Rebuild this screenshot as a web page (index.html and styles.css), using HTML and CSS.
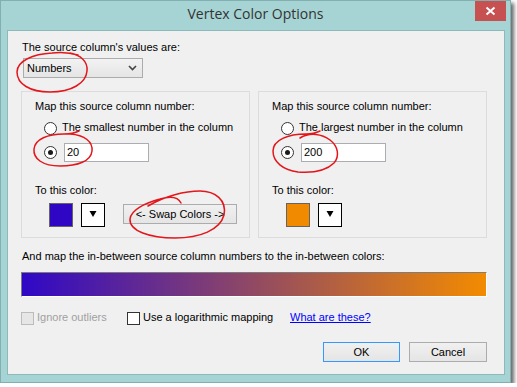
FILE: index.html
```html
<!DOCTYPE html>
<html>
<head>
<meta charset="utf-8">
<title>Vertex Color Options</title>
<link rel="stylesheet" href="styles.css">
</head>
<body>

<!-- DIALOG WINDOW -->
<div class="window">
  <div class="titlebar">
    <span></span>
    <div class="title">Vertex Color Options</div>
    <div class="close">
      <svg width="31" height="20" viewBox="0 0 31 20"><path d="M11.5 6.5 L19.5 13.5 M19.5 6.5 L11.5 13.5" stroke="#fff" stroke-width="2"/></svg>
    </div>
  </div>

  <div class="client">
    <div class="label first">The source column's values are:</div>
    <div class="combo">
      <span>Numbers</span>
      <svg width="9" height="6" viewBox="0 0 9 6"><path d="M1 1 L4.5 4.5 L8 1" fill="none" stroke="#444" stroke-width="1.6"/></svg>
    </div>

    <!-- dos grupos: minimo y maximo -->
    <div class="groups">
      <div class="group">
        <div class="label">Map this source column number:</div>
        <div class="radio-row top">
          <span class="radio"></span><span class="radio-text">The smallest number in the column</span>
        </div>
        <div class="radio-row">
          <span class="radio checked"></span><div class="textbox">20</div>
        </div>
        <div class="label color-label">To this color:</div>
        <div class="color-row">
          <span class="swatch blue"></span>
          <span class="arrow-btn"><svg width="22" height="22" viewBox="0 0 22 22"><polygon points="7.5,7 14.5,7 11,13" fill="#000"/></svg></span>
          <div class="btn swap">&lt;- Swap Colors -&gt;</div>
        </div>
      </div>

      <div class="group">
        <div class="label">Map this source column number:</div>
        <div class="radio-row top">
          <span class="radio"></span><span class="radio-text">The largest number in the column</span>
        </div>
        <div class="radio-row">
          <span class="radio checked"></span><div class="textbox">200</div>
        </div>
        <div class="label color-label">To this color:</div>
        <div class="color-row">
          <span class="swatch orange"></span>
          <span class="arrow-btn"><svg width="22" height="22" viewBox="0 0 22 22"><polygon points="7.5,7 14.5,7 11,13" fill="#000"/></svg></span>
        </div>
      </div>
    </div>

    <div class="label between">And map the in-between source column numbers to the in-between colors:</div>
    <div class="gradient"></div>

    <div class="check-row">
      <div class="check-item ignore"><span class="checkbox disabled"></span><span class="muted">Ignore outliers</span></div>
      <div class="check-item log"><span class="checkbox"></span><span>Use a logarithmic mapping</span></div>
      <a class="link" href="#">What are these?</a>
    </div>

    <div class="buttons">
      <div class="btn ok">OK</div>
      <div class="btn cancel">Cancel</div>
    </div>
  </div>
</div>

<!-- marcas rojas a mano sobre la captura -->
<svg class="marks" width="517" height="387" viewBox="0 0 517 387">
  <g fill="none" stroke="#e3161b" stroke-width="1.5" stroke-linecap="round">
    <path d="M70 53 C80 55 88 61 87 71 C86 83 72 92 50 92 C30 92 17 84 17 72 C17 61 33 54 52 53 C60 52 68 52 78 55"/>
    <path d="M70 134 C85 135 93 142 92 151 C91 161 78 166 60 166 C43 166 33 159 34 149 C35 139 48 134 64 134 C70 134 75 133 79 131"/>
    <path d="M181 203 C178 197 170 196 160 199 C145 203 131 210 130 219 C129 231 150 238 175 238 C200 238 220 230 224 215 C227 200 215 191 200 191 C185 191 165 196 148 206"/>
    <path d="M300 138 C310 132 322 134 330 140 C338 146 340 156 334 163 C326 171 312 173 298 172 C283 170 273 162 273 151 C273 140 288 134 306 134 C312 134 316 133 320 131"/>
  </g>
</svg>

</body>
</html>
```

FILE: styles.css
```css
* {
  box-sizing: border-box;
}

body {
  margin: 0;
  background: #fff;
  font-family: "Liberation Sans", Arial, sans-serif;
  font-size: 11px;
  color: #000;
}

/* ventana */
.window {
  width: 511px;
  height: 383px;
  border: 1px solid #82afaf;
  background: #a6d3d3;
  padding: 0 5px 7px 6px;
  display: flex;
  flex-direction: column;
  box-shadow: 3px 3px 4px rgba(0, 0, 0, 0.6);
}

.titlebar {
  height: 29px;
  margin: 0 -5px 0 -6px;
  display: grid;
  grid-template-columns: 1fr auto 1fr;
  align-items: start;
}

.title {
  font-family: "Open Sans", "Noto Sans", sans-serif;
  font-size: 14px;
  line-height: 18px;
  padding-top: 4px;
  color: #333;
}

.close {
  justify-self: end;
  margin-right: 4px;
  width: 31px;
  height: 20px;
  background: #c75050;
}

.close svg {
  display: block;
}

.client {
  flex: 1;
  border: 1px solid #8cbaba;
  background: #f0f0f0;
  padding: 10px 17px 0 13px;
}

.label {
  line-height: 13px;
  height: 13px;
  white-space: nowrap;
}

.label.first,
.label.between {
  margin-left: 1px;
}

.label.between {
  margin-top: 12px;
}

/* combo */
.combo {
  margin: 4px 0 0 2px;
  width: 120px;
  height: 20px;
  border: 1px solid #acacac;
  background: linear-gradient(#f2f2f2, #e5e5e5);
  display: flex;
  align-items: center;
  justify-content: space-between;
  padding: 0 5px 0 3px;
  line-height: 13px;
}

.combo svg {
  display: block;
}

/* grupos */
.groups {
  margin-top: 13px;
  display: grid;
  grid-template-columns: 1fr 1fr;
  gap: 8px;
}

.group {
  border: 1px solid #dcdcdc;
  padding: 8px 0 10px 13px;
}

.radio-row {
  display: flex;
  align-items: center;
  margin-left: 9px;
  margin-top: 9px;
  height: 19px;
}

.radio-row.top {
  margin-top: 8px;
  height: 13px;
  line-height: 13px;
  align-items: flex-start;
}

.radio {
  width: 13px;
  height: 13px;
  border: 1px solid #333;
  border-radius: 50%;
  background: #fff;
  flex: none;
  display: flex;
  align-items: center;
  justify-content: center;
}

.radio-row.top .radio {
  margin-top: 1px;
}

.radio.checked::after {
  content: "";
  width: 5px;
  height: 5px;
  border-radius: 50%;
  background: #1a1a1a;
}

.radio-text {
  margin-left: 5px;
  white-space: nowrap;
}

.textbox {
  margin-left: 7px;
  width: 85px;
  height: 19px;
  border: 1px solid #abadb3;
  background: #fff;
  padding-left: 2px;
  line-height: 17px;
}

.color-label {
  margin-top: 22px;
}

.color-row {
  display: flex;
  align-items: flex-start;
  margin-top: 6px;
  margin-left: 14px;
  height: 24px;
}

.swatch {
  width: 24px;
  height: 24px;
  border: 1px solid #646464;
}

.swatch.blue {
  background: #2e06c3;
}

.swatch.orange {
  background: #f28a00;
}

.arrow-btn {
  margin-left: 8px;
  width: 24px;
  height: 24px;
  border: 1px solid #000;
  background: #fff;
}

.arrow-btn svg {
  display: block;
}

.btn {
  height: 20px;
  border: 1px solid #acacac;
  background: linear-gradient(#f0f0f0, #e5e5e5);
  display: flex;
  align-items: center;
  justify-content: center;
  line-height: 13px;
}

.btn.swap {
  margin: 1px 0 0 18px;
  width: 114px;
}

/* barra de degradado */
.gradient {
  margin-top: 9px;
  height: 25px;
  border-top: 1px solid #7d7d7d;
  border-left: 1px solid #7d7d7d;
  border-right: 1px solid #fff;
  border-bottom: 1px solid #fff;
  background: linear-gradient(to right, #2f08c6, #f38b00);
}

/* casillas */
.check-row {
  margin-top: 14px;
  display: flex;
  align-items: flex-start;
  height: 15px;
  line-height: 13px;
}

.check-item {
  display: flex;
  align-items: flex-start;
}

.check-item.ignore {
  width: 106px;
}

.check-item.log {
  width: 163px;
}

.checkbox {
  width: 13px;
  height: 13px;
  margin: 1px 3px 0 0;
  border: 1px solid #333;
  background: #fff;
  flex: none;
}

.checkbox.disabled {
  border-color: #bcbcbc;
  background: #e6e6e6;
}

.muted {
  color: #a0a0a0;
}

.link {
  color: #0000ff;
  text-decoration: underline;
}

.buttons {
  margin-top: 16px;
  display: flex;
  justify-content: flex-end;
  gap: 9px;
}

.btn.ok {
  width: 77px;
  border-color: #3399ff;
}

.btn.cancel {
  width: 78px;
}

.marks {
  position: absolute;
  top: 0;
  left: 0;
  pointer-events: none;
}
```
